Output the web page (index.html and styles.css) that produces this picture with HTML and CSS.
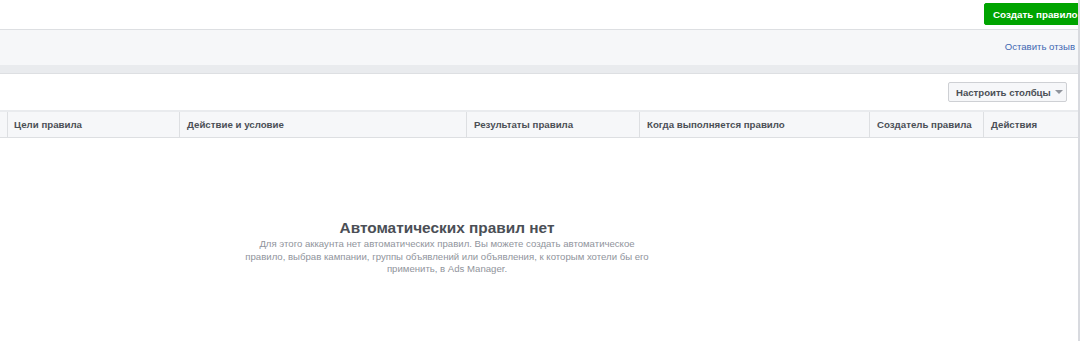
FILE: index.html
```html
<!DOCTYPE html>
<html lang="ru">
<head>
<meta charset="utf-8">
<link rel="stylesheet" href="styles.css">
</head>
<body>
<div class="topbar">
  <button class="btn-green">Создать правило</button>
</div>
<div class="subbar">
  <a class="feedback" href="#">Оставить отзыв</a>
</div>
<div class="band"></div>
<div class="toolbar">
  <button class="btn-cols">Настроить столбцы <span class="caret"></span></button>
</div>
<div class="thead">
  <div class="th c0"></div>
  <div class="th c1">Цели правила</div>
  <div class="th c2">Действие и условие</div>
  <div class="th c3">Результаты правила</div>
  <div class="th c4">Когда выполняется правило</div>
  <div class="th c5">Создатель правила</div>
  <div class="th c6">Действия</div>
</div>
<div class="empty">
  <div class="empty-inner">
    <div class="empty-title">Автоматических правил нет</div>
    <div class="empty-text">Для этого аккаунта нет автоматических правил. Вы можете создать автоматическое правило, выбрав кампании, группы объявлений или объявления, к которым хотели бы его применить, в Ads Manager.</div>
  </div>
</div>
</body>
</html>
```
FILE: styles.css
```css
* { box-sizing: border-box; }
html, body { margin: 0; padding: 0; }
body {
  width: 1080px;
  height: 341px;
  overflow: hidden;
  background: #fff;
  font-family: "Liberation Sans", Arial, sans-serif;
  color: #4b4f56;
  border-right: 2px solid #d8dadf;
}
.topbar {
  height: 30px;
  display: flex;
  justify-content: flex-end;
  align-items: flex-start;
  padding-top: 3px;
  border-bottom: 1px solid #dddfe2;
}
.btn-green {
  height: 22px;
  width: 96px;
  margin-right: -2px;
  background: #00a400;
  border: 1px solid #00a400;
  border-radius: 2px;
  color: #fff;
  font-family: inherit;
  font-weight: bold;
  font-size: 9.8px;
  padding: 0 4px 0 8px;
  text-align: left;
  white-space: nowrap;
}
.subbar {
  height: 35px;
  background: #f6f7f9;
  display: flex;
  justify-content: flex-end;
  align-items: center;
  padding-right: 3px;
  padding-bottom: 2px;
}
.feedback {
  color: #4267b2;
  font-size: 9.6px;
  text-decoration: none;
}
.band {
  height: 9px;
  background: #e9ebee;
  border-bottom: 1px solid #dddfe2;
}
.toolbar {
  height: 36px;
  display: flex;
  justify-content: flex-end;
  align-items: flex-start;
  padding-top: 8px;
  padding-right: 11px;
}
.btn-cols {
  height: 20px;
  width: 119px;
  background: #f6f7f9;
  border: 1px solid #ced0d4;
  border-radius: 2px;
  color: #4b4f56;
  font-family: inherit;
  font-weight: bold;
  font-size: 9.6px;
  padding: 0 6px 0 7px;
  display: flex;
  align-items: center;
  gap: 4px;
  white-space: nowrap;
}
.caret {
  width: 0;
  height: 0;
  border-left: 4px solid transparent;
  border-right: 4px solid transparent;
  border-top: 4px solid #90949c;
}
.thead {
  display: flex;
  height: 28px;
  border-top: 2px solid #e9ebee;
  border-bottom: 1px solid #dddfe2;
  background: #f6f7f9;
}
.th {
  flex: none;
  display: flex;
  align-items: center;
  padding-left: 7px;
  font-size: 9.7px;
  font-weight: bold;
  color: #4b4f56;
  border-right: 1px solid #dddfe2;
  white-space: nowrap;
}
.c0 { width: 7px; }
.c1 { width: 172px; padding-left: 6px; }
.c2 { width: 287px; }
.c3 { width: 173px; }
.c4 { width: 230px; }
.c5 { width: 114px; }
.c6 { flex: 1; border-right: none; }
.empty {
  display: flex;
  padding-top: 80px;
  padding-left: 243px;
}
.empty-inner {
  width: 408px;
  text-align: center;
}
.empty-title {
  font-size: 15.4px;
  font-weight: bold;
  color: #4b4f56;
  line-height: 20px;
}
.empty-text {
  font-size: 9.6px;
  color: #90949c;
  line-height: 12.5px;
}
```
